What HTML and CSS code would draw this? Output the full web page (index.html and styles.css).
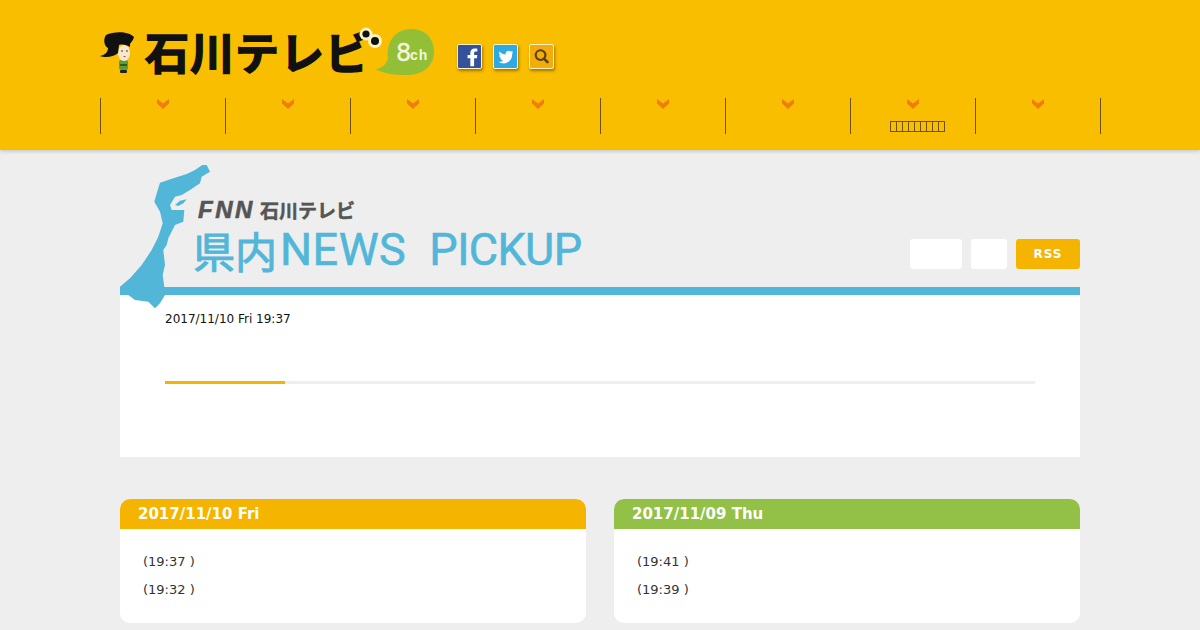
FILE: index.html
```html
<!DOCTYPE html>
<html lang="ja">
<head>
    <meta charset="UTF-8">
    <meta name="viewport" content="width=device-width, initial-scale=1.0">
    <title>県内NEWS PICKUP</title>
    <link rel="stylesheet" href="styles.css">
</head>
<body>
    <header class="site-header">
        <div class="header-top">
            <a href="#" class="logo">
                <svg class="logo-girl" viewBox="0 0 36 46" width="36" height="46">
                    <rect x="19" y="29" width="9" height="10" rx="2" fill="#5d9c3a"/>
                    <rect x="20" y="33" width="7" height="2" fill="#2f5d20"/>
                    <rect x="20" y="39" width="7" height="3" rx="1" fill="#222"/>
                    <ellipse cx="24" cy="22" rx="6" ry="8" fill="#f8e8cc"/>
                    <path d="M6 4 C14 0 29 0 34 6 C33 10 31 11 30 13 L30 16 C27 14 23 13 19 14 L18 22 C14 26 5 27 0 25 C5 24 8 21 8 17 C4 15 3 8 6 4 Z" fill="#111"/>
                    <circle cx="22" cy="20" r="0.8" fill="#222"/>
                    <circle cx="27" cy="20" r="0.8" fill="#222"/>
                    <rect x="23.5" y="25" width="2" height="1" fill="#c44"/>
                </svg>
                <span class="logo-text">石川テレビ</span>
                <svg class="logo-eyes" viewBox="0 0 24 24" width="24" height="24">
                    <circle cx="7" cy="7" r="6.5" fill="#fff3c4"/>
                    <circle cx="16" cy="14" r="7" fill="#fff3c4"/>
                    <circle cx="7" cy="7" r="3.6" fill="#111"/>
                    <circle cx="16" cy="14" r="4" fill="#111"/>
                </svg>
                <svg class="logo-bubble" viewBox="0 0 58 46" width="58" height="46">
                    <path d="M35 0 C49 0 58 9 58 23 C58 37 47 46 31 46 C19 46 7 45 0 40 C6 39 11 35 12 29 C10 12 20 0 35 0 Z" fill="#93bf37"/>
                    <text x="20" y="32" class="bubble-num">8</text>
                    <text x="34" y="31" class="bubble-ch">ch</text>
                </svg>
            </a>
            <div class="social-icons">
                <a href="#" class="social-icon icon-fb">
                    <svg viewBox="0 0 25 25" width="23" height="23"><path d="M17.5 23 V14.5 H20.5 L21 11 H17.5 V9 C17.5 7.8 18 7.2 19.3 7.2 H21 V4 C20.3 3.9 19.3 3.8 18 3.8 C15.2 3.8 13.4 5.5 13.4 8.5 V11 H10.4 V14.5 H13.4 V23 Z" fill="#fff"/></svg>
                </a>
                <a href="#" class="social-icon icon-tw">
                    <svg viewBox="0 0 24 24" width="23" height="23"><path d="M20 7.3 C19.4 7.6 18.8 7.7 18.2 7.8 C18.8 7.4 19.3 6.8 19.6 6.1 C19 6.5 18.3 6.7 17.6 6.9 C16.3 5.5 14.1 5.6 12.9 7 C12.2 7.8 12 8.9 12.2 9.9 C9.7 9.8 7.4 8.6 5.8 6.7 C5 8.2 5.4 10 6.8 11 C6.3 11 5.8 10.8 5.4 10.6 C5.4 12.2 6.5 13.5 8 13.9 C7.5 14 7 14 6.5 13.9 C6.9 15.2 8.1 16.2 9.5 16.2 C8.1 17.3 6.4 17.8 4.7 17.6 C11.5 21.8 19.5 17.2 19 9 C19.2 8.5 19.7 7.9 20 7.3 Z" fill="#fff"/></svg>
                </a>
                <a href="#" class="social-icon icon-search">
                    <svg viewBox="0 0 25 25" width="23" height="23"><circle cx="11.5" cy="11" r="5.3" fill="none" stroke="#5a4210" stroke-width="2.4"/><path d="M15.5 15 L19 18.5" stroke="#5a4210" stroke-width="2.8" stroke-linecap="round"/></svg>
                </a>
            </div>
        </div>
        <nav class="global-nav">
            <a href="#" class="nav-item"></a>
            <a href="#" class="nav-item"></a>
            <a href="#" class="nav-item"></a>
            <a href="#" class="nav-item"></a>
            <a href="#" class="nav-item"></a>
            <a href="#" class="nav-item"></a>
            <a href="#" class="nav-item">
                <span class="tofu-row">
                    <i></i><i></i><i></i><i></i><i></i><i></i><i></i><i></i><i></i>
                </span>
            </a>
            <a href="#" class="nav-item"></a>
        </nav>
    </header>

    <main class="wrapper">
        <svg class="ishikawa-map" viewBox="0 0 260 160" width="260" height="160">
            <path d="M96.7 5 L100 11.7 L91.7 16.7 L90 23.3 L80 30 L71.7 35 L65 36.7 L60 45 L61.7 50 L68.3 50 L74.3 50 L73.3 61.7 L65 65 L58.3 78.3 L56.7 85 L53.3 90 L55 105 L52.7 115 L54.3 126.7 L55 135 L50 143.3 L45 148.3 L38.3 141.7 L25 140 L18.3 135 L10 133.3 L10 126.7 L20 118.3 L31.7 105 L41.7 90 L47.7 78 L50 71.7 L52.7 63.3 L50 51.7 L44.3 41.7 L47.7 30 L50 22.7 L63.3 18.3 L76.7 14 L85 10 L92.3 5 Z" fill="#52b6d9"/>
            <path d="M65 45 L70 40.7 L76.7 39.3 L73.3 43.3 L68.3 46 Z" fill="#52b6d9"/>
        </svg>

        <div class="page-head">
            <div class="page-title">
                <p class="title-sub"><em>FNN</em><span>石川テレビ</span></p>
                <h1 class="title-main"><span class="title-ja">県内</span>NEWS<span class="title-gap"></span><span class="title-pickup">PICKUP</span></h1>
            </div>
            <div class="head-buttons">
                <a href="#" class="head-btn btn-wide"></a>
                <a href="#" class="head-btn btn-small"></a>
                <a href="#" class="head-btn btn-rss">RSS</a>
            </div>
        </div>

        <section class="pickup">
            <p class="pickup-date">2017/11/10 Fri 19:37</p>
            <div class="progress"><div class="progress-fill"></div></div>
        </section>

        <div class="day-columns">
            <section class="day-card">
                <h2 class="day-title day-yellow">2017/11/10 Fri</h2>
                <ul class="day-list">
                    <li>(19:37 )</li>
                    <li>(19:32 )</li>
                </ul>
            </section>
            <section class="day-card">
                <h2 class="day-title day-green">2017/11/09 Thu</h2>
                <ul class="day-list">
                    <li>(19:41 )</li>
                    <li>(19:39 )</li>
                </ul>
            </section>
        </div>
    </main>
</body>
</html>
```

FILE: styles.css
```css
body {
    margin: 0;
    background-color: #eeeeee;
    font-family: 'DejaVu Sans', sans-serif;
    color: #333;
    overflow: hidden;
}

a {
    text-decoration: none;
}

/* Header */
.site-header {
    height: 150px;
    box-sizing: border-box;
    padding: 25px 100px 0;
    background-color: #fabe00;
    box-shadow: 0 1px 4px rgba(0, 0, 0, 0.2);
}

.header-top {
    display: flex;
    align-items: flex-start;
    height: 73px;
}

.logo {
    display: flex;
    align-items: flex-start;
    width: 357px;
    color: #111;
}

.logo-girl {
    flex: none;
    margin-top: 6px;
}

.logo-text {
    margin: -2px 0 0 9px;
    font-family: 'Noto Sans CJK JP', sans-serif;
    font-size: 44px;
    line-height: 56px;
    font-weight: 700;
    letter-spacing: 1px;
    white-space: nowrap;
    -webkit-text-stroke: 1.5px #111;
    flex: none;
    width: 214px;
}

.logo-eyes {
    flex: none;
    margin: 2px 0 0 0;
}

.logo-bubble {
    flex: none;
    margin: 4px 0 0 -7px;
}

.bubble-num {
    font-family: 'DejaVu Sans', sans-serif;
    font-size: 24px;
    fill: #f6f6dc;
    stroke: #f6f6dc;
    stroke-width: 0.3px;
}

.bubble-ch {
    font-family: 'Liberation Sans', sans-serif;
    font-size: 14px;
    font-weight: 700;
    letter-spacing: 1px;
    fill: #f6f6dc;
}

.social-icons {
    display: flex;
    gap: 11px;
    margin-top: 19px;
}

.social-icon {
    display: flex;
    width: 23px;
    height: 23px;
    border: 1px solid #fff3c0;
    border-radius: 2px;
    box-shadow: 1px 2px 3px rgba(80, 50, 0, 0.5);
    overflow: hidden;
}

.icon-fb {
    background-color: #35519c;
}

.icon-tw {
    background-color: #2ea9e3;
}

.icon-search {
    background-color: #f4ab0c;
}

/* Navigation */
.global-nav {
    display: flex;
    height: 36px;
    border-right: 1px solid #6b5213;
    width: 1000px;
}

.nav-item {
    position: relative;
    flex: 0 0 125px;
    box-sizing: border-box;
    border-left: 1px solid #6b5213;
    display: flex;
    justify-content: center;
    padding-top: 23px;
}

.nav-item::before {
    content: "";
    position: absolute;
    top: 1px;
    left: 56px;
    width: 12px;
    height: 10px;
    background-color: #f07d10;
    clip-path: polygon(0 0, 50% 45%, 100% 0, 100% 45%, 50% 100%, 0 45%);
}

.tofu-row {
    display: flex;
    height: 11px;
    margin-left: 8px;
}

.tofu-row i {
    width: 5px;
    height: 9px;
    border: 1px solid #6b5213;
    border-left-width: 0;
}

.tofu-row i:first-child {
    border-left-width: 1px;
}

/* Main column */
.wrapper {
    width: 960px;
    margin: 0 auto;
}

.ishikawa-map {
    position: absolute;
    top: 160px;
    left: 110px;
    z-index: 2;
}

.page-head {
    display: flex;
    justify-content: space-between;
    align-items: flex-end;
    height: 137px;
}

.page-title {
    padding-left: 73px;
}

.title-sub {
    display: flex;
    align-items: center;
    margin: 0;
    height: 20px;
    line-height: 20px;
    color: #555;
    font-weight: 700;
}

.title-sub em {
    width: 67px;
    padding-left: 5px;
    box-sizing: border-box;
    font-family: 'Liberation Sans', sans-serif;
    font-size: 24px;
    letter-spacing: 2.5px;
    -webkit-text-stroke: 0.6px #555;
}

.title-sub span {
    font-family: 'Noto Sans CJK JP', sans-serif;
    font-size: 19px;
    -webkit-text-stroke: 0.5px #555;
}

.title-main {
    display: flex;
    align-items: center;
    margin: 6px 0 13px;
    height: 48px;
    line-height: 48px;
    font-family: 'Roboto', sans-serif;
    font-size: 45px;
    font-weight: 400;
    letter-spacing: 0.5px;
    color: #52b6d9;
    white-space: nowrap;
    -webkit-text-stroke: 0.6px #52b6d9;
}

.title-ja {
    font-family: 'Noto Sans CJK JP', sans-serif;
    font-size: 42px;
    letter-spacing: 0;
    margin-right: 3px;
    -webkit-text-stroke: 1px #52b6d9;
}

.title-gap {
    width: 23px;
}

.title-pickup {
    letter-spacing: -0.6px;
}

.head-buttons {
    display: flex;
    gap: 9px;
    margin-bottom: 18px;
}

.head-btn {
    display: block;
    height: 30px;
    line-height: 30px;
    border-radius: 3px;
    background-color: #fff;
    text-align: center;
}

.btn-wide {
    width: 52px;
}

.btn-small {
    width: 36px;
}

.btn-rss {
    width: 64px;
    background-color: #f4b400;
    color: #fff;
    font-size: 12px;
    font-weight: 700;
    letter-spacing: 1px;
}

/* Pickup panel */
.pickup {
    height: 170px;
    box-sizing: border-box;
    padding: 17px 45px 0;
    background-color: #fff;
    border-top: 8px solid #52b6d9;
}

.pickup-date {
    margin: 0;
    font-size: 12px;
    line-height: 14px;
    color: #111;
}

.progress {
    height: 3px;
    margin-top: 55px;
    background-color: #eeeeee;
}

.progress-fill {
    width: 120px;
    height: 3px;
    background-color: #f4b400;
}

/* Date columns */
.day-columns {
    display: flex;
    gap: 28px;
    margin-top: 42px;
}

.day-card {
    flex: 1;
    height: 124px;
    border-radius: 10px;
    background-color: #fff;
    overflow: hidden;
}

.day-title {
    margin: 0;
    padding-left: 18px;
    height: 30px;
    font-size: 15px;
    line-height: 30px;
    font-weight: 700;
    color: #fff;
}

.day-yellow {
    background-color: #f4b400;
}

.day-green {
    background-color: #93c147;
}

.day-list {
    list-style: none;
    margin: 0;
    padding: 19px 23px 0;
    font-size: 13px;
    line-height: 28px;
    color: #333;
}
```
